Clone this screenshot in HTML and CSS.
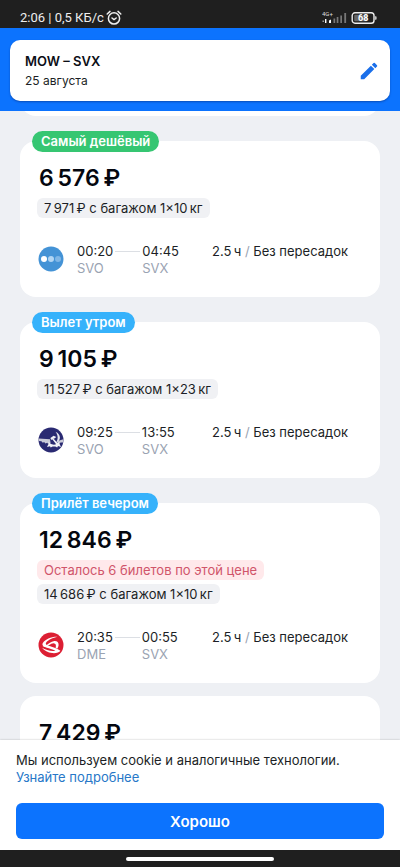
FILE: index.html
```html
<!DOCTYPE html>
<html lang="ru">
<head>
<meta charset="utf-8">
<meta name="viewport" content="width=device-width, initial-scale=1">
<title>MOW – SVX</title>
<link rel="stylesheet" href="styles.css">
</head>
<body>
<div class="status">
  <span class="status-text">2:06 | 0,5 КБ/с</span>
  <svg class="alarm" width="16" height="16" viewBox="0 0 16 16" fill="none" stroke="currentColor" stroke-width="1.5" stroke-linecap="round" stroke-linejoin="round"><circle cx="8" cy="8.4" r="5.6"/><path d="M1.200 4 4 1.400M14.800 4 12 1.400M6 8l2 1.600L10.200 8"/></svg>
  <span class="status-right">
    <svg width="26" height="14" viewBox="0 0 26 14">
      <text class="net" x="0" y="5">4G+</text>
      <path fill="#fff" d="M3 8h1.400v4H3zM7 12V9.500l2-1V12z"/>
      <path fill="#bbb" d="M.6 9.500h1.200v1.500H.6z"/>
      <path fill="#777" d="M11.500 7.500h1.700V12h-1.700zM14.700 6h1.700v6h-1.700zM18.300 4.500h1.700V12h-1.700zM22.300 2h1.800v10h-1.800z"/>
    </svg>
    <svg width="26" height="12" viewBox="0 0 26 12">
      <rect x="1.200" y=".8" width="21.800" height="10.400" rx="2.800" fill="#1f1f1f" stroke="#eee" stroke-width="1.400"/>
      <rect x="3.200" y="2.800" width="13" height="6.400" rx="1" fill="#666"/>
      <path d="M24.200 4.200h.5a.8.800 0 0 1 .8.800v2a.8.800 0 0 1-.8.800h-.5z" fill="#eee"/>
      <text class="level" x="12.200" y="9" text-anchor="middle">68</text>
    </svg>
  </span>
</div>

<header class="header">
  <div class="search">
    <div>
      <h1 class="route">MOW – SVX</h1>
      <p class="date">25 августа</p>
    </div>
    <button class="edit" type="button" aria-label="Изменить поиск">
      <svg width="22" height="22" viewBox="0 0 24 24" fill="currentColor"><path d="M3 17.250V21h3.750L17.810 9.940l-3.750-3.750zM20.710 7.040a1 1 0 0 0 0-1.410l-2.340-2.340a1 1 0 0 0-1.410 0l-1.830 1.830 3.750 3.750z"/></svg>
    </button>
  </div>
</header>

<main class="tickets">
  <div class="card card-scrolled"></div>

  <article class="card">
    <span class="badge badge-green">Самый дешёвый</span>
    <h2 class="price">6&#8201;576&#8201;₽</h2>
    <div class="chips"><span class="chip">7&#8201;971&#8201;₽ с багажом 1×10&#8201;кг</span></div>
    <div class="flight">
      <svg class="logo" width="26" height="26" viewBox="0 0 26 26"><circle cx="13" cy="13" r="12.500" fill="#4493d6"/><circle cx="6" cy="13" r="3" fill="#fff"/><circle cx="13" cy="13" r="3" fill="#b1d5f3"/><circle cx="20" cy="13" r="3" fill="#7fb6e6"/></svg>
      <div class="point"><span class="time">00:20</span><span class="code">SVO</span></div>
      <span class="line"></span>
      <div class="point"><span class="time">04:45</span><span class="code">SVX</span></div>
      <div class="summary">2.5&#8201;ч <i class="slash">/</i> Без пересадок</div>
    </div>
  </article>

  <article class="card">
    <span class="badge">Вылет утром</span>
    <h2 class="price">9&#8201;105&#8201;₽</h2>
    <div class="chips"><span class="chip">11&#8201;527&#8201;₽ с багажом 1×23&#8201;кг</span></div>
    <div class="flight">
      <svg class="logo" width="26" height="26" viewBox="0 0 26 26">
        <circle cx="13" cy="13" r="12.500" fill="#2a2a72"/>
        <path d="M.5 11.400 12 12.300l.6 4-2.600.5-.7-1-2 .6-.8-1.200-2.200.3-.8-1.300-2.700-.2zM25.400 12.200l-5 1.600-1.500 2.700 2.500-.1 1.200-.8 2.300-.2z" fill="#c9cad8"/>
        <path d="M17.500 4.800c5.600 2.400 6 9.200.6 11 2.200-3.800 2.200-7.400-.6-11z" fill="#e6e7ef"/>
        <path d="m12.400 11 3.200-2.200 2.700 1.300-1.900 1.300-1 .1 4.800 5.200-1.500 1.200-4.200-5.500-1.400.3zM10.400 15l2.600 2 3 .8 3-.9 2-1.800.5 1.600 1.500 3.300-3-.9-.8 1.300-1.900-1-2.700.1-1.900 1.100-.7-1.400-3 .8 1.600-3.200z" fill="#f2f2f7"/>
      </svg>
      <div class="point"><span class="time">09:25</span><span class="code">SVO</span></div>
      <span class="line"></span>
      <div class="point"><span class="time">13:55</span><span class="code">SVX</span></div>
      <div class="summary">2.5&#8201;ч <i class="slash">/</i> Без пересадок</div>
    </div>
  </article>

  <article class="card">
    <span class="badge">Прилёт вечером</span>
    <h2 class="price">12&#8201;846&#8201;₽</h2>
    <div class="chips">
      <span class="chip chip-red">Осталось 6 билетов по этой цене</span>
      <span class="chip">14&#8201;686&#8201;₽ с багажом 1×10&#8201;кг</span>
    </div>
    <div class="flight">
      <svg class="logo" width="26" height="26" viewBox="0 0 26 26">
        <circle cx="13" cy="13" r="12.500" fill="#dc1f33"/>
        <path d="M19.500 4.800c-4.500.8-9.500 3.400-11.300 5.600-1.200 1.600.2 2.600 2.600 3.300 3.600 1.100 8 2.400 11.600 5-1 1.700-4.400 2.800-8.200 2.400-4.200-.5-8-2.500-10.200-5.300 3.800 2.400 9.200 3.600 13.400 2.900-2.800-1.500-6.200-2.300-8.600-3-3.600-1.100-5.300-2.600-3.800-5 2.200-3.300 8.200-6.100 14.500-5.900z" fill="#fff"/>
        <path d="M4.200 14.800c4.600-.6 6.600-4.800 11.400-5.600 3.200-.5 5.300 1.200 5 4-.1 1.300-.6 2.500-1.400 3.500l-1.600-.9c.8-2.600.2-4.500-2-4.600-3.500-.1-5.800 4.600-11.400 3.600z" fill="#fff"/>
      </svg>
      <div class="point"><span class="time">20:35</span><span class="code">DME</span></div>
      <span class="line"></span>
      <div class="point"><span class="time">00:55</span><span class="code">SVX</span></div>
      <div class="summary">2.5&#8201;ч <i class="slash">/</i> Без пересадок</div>
    </div>
  </article>

  <article class="card card-plain">
    <h2 class="price">7&#8201;429&#8201;₽</h2>
  </article>
</main>

<section class="cookies">
  <p class="cookies-text">Мы используем cookie и аналогичные технологии. <a class="more" href="#">Узнайте подробнее</a></p>
  <button class="ok" type="button">Хорошо</button>
</section>
<div class="navbar"><span class="handle"></span></div>
</body>
</html>
```
FILE: styles.css
```css
* {
  box-sizing: border-box;
}

body {
  display: flex;
  flex-direction: column;
  height: 100vh;
  margin: 0;
  overflow: hidden;
  background: #eef0f4;
  color: #1c1f26;
  font-family: Inter, "Liberation Sans", sans-serif;
  font-size: 13px;
  line-height: 17px;
}

h1, h2, p {
  margin: 0;
}

button {
  border: 0;
  padding: 0;
  font-family: inherit;
  cursor: pointer;
}

.status {
  display: flex;
  flex: none;
  align-items: center;
  gap: 2px;
  padding: 7px 23px 0 20px;
  height: 28px;
  background: #1f1f1f;
  color: #eee;
}

.status-text {
  font: 400 13px/20px Roboto, sans-serif;
}

.status-right {
  display: flex;
  align-items: center;
  gap: 3px;
  margin-left: auto;
}

.net {
  fill: #ddd;
  font: 6px Roboto, sans-serif;
}

.level {
  fill: #fff;
  font: 700 9px Roboto, sans-serif;
}

.header {
  flex: none;
  padding: 12px 10px 10px;
  background: #0c73fe;
}

.search {
  display: flex;
  align-items: center;
  justify-content: space-between;
  padding: 11px 10px 10px 15px;
  border-radius: 10px;
  background: #fff;
  box-shadow: 0 1px 2px rgba(0, 20, 80, .4);
}

.route {
  color: #0b0e16;
  font-size: 13px;
  font-weight: 600;
  line-height: 20px;
}

.date {
  font-size: 12px;
  line-height: 20px;
}

.edit {
  display: flex;
  background: none;
  color: #1a6fea;
}

.tickets {
  flex: 1;
  min-height: 0;
  padding: 0 20px;
  overflow: hidden;
}

.card {
  position: relative;
  margin-bottom: 25px;
  padding: 21px 18px 20px;
  border-radius: 16px;
  background: #fff;
}

.card-scrolled {
  margin-top: -36px;
}

.card-plain {
  margin-top: -12px;
}

.badge {
  position: absolute;
  top: -10px;
  left: 12px;
  padding: 0 9px;
  border-radius: 11px;
  background: #36b2fb;
  color: #fff;
  font-weight: 600;
  line-height: 21px;
}

.badge-green {
  background: #36c672;
}

.price {
  padding-left: 1px;
  color: #04070f;
  font-size: 23px;
  font-weight: 600;
  line-height: 32px;
}

.chips {
  display: flex;
  flex-direction: column;
  align-items: flex-start;
  gap: 4px;
  margin: 4px -1px 25px;
}

.chip {
  padding: 0 7px;
  border-radius: 6px;
  background: #f0f1f4;
  line-height: 20px;
}

.chip-red {
  background: #ffe9eb;
  color: #d0546a;
}

.flight {
  display: flex;
  align-items: flex-start;
}

.logo {
  flex: none;
  margin: 3px 13px 0 0;
}

.point {
  display: flex;
  flex-direction: column;
}

.code {
  color: #9aa3b2;
}

.line {
  width: 25px;
  height: 1px;
  margin: 8px 2px 0;
  background: #dcdfe4;
}

.summary {
  margin-left: auto;
  margin-right: 14px;
  white-space: nowrap;
}

.slash {
  color: #9aa3b2;
  font-style: normal;
}

.cookies {
  position: relative;
  flex: none;
  padding: 12px 16px 11px;
  background: #fff;
  box-shadow: 0 0 2px rgba(0, 0, 0, .25);
}

.cookies-text {
  margin-bottom: 17px;
}

.more {
  display: block;
  width: max-content;
  color: #2878c8;
  text-decoration: none;
}

.ok {
  width: 100%;
  height: 36px;
  border-radius: 6px;
  background: #0c73fe;
  color: #fff;
  font-size: 15px;
  font-weight: 600;
}

.navbar {
  position: relative;
  display: flex;
  flex: none;
  align-items: center;
  justify-content: center;
  height: 17px;
  background: #1f1f1f;
}

.handle {
  width: 37%;
  height: 4px;
  border-radius: 2px;
  background: #fff;
}
```
